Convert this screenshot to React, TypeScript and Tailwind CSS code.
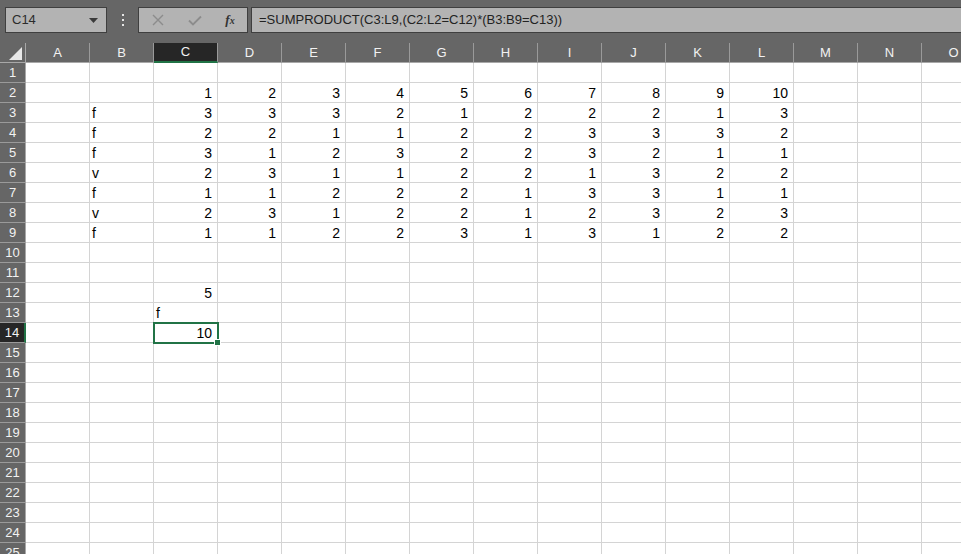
import React from "react";

const COLS = ["A", "B", "C", "D", "E", "F", "G", "H", "I", "J", "K", "L", "M", "N", "O"];
const ROW_COUNT = 25;

// table data: row number -> column letter -> value
const data: Record<number, Record<string, string | number>> = {
  2: { C: 1, D: 2, E: 3, F: 4, G: 5, H: 6, I: 7, J: 8, K: 9, L: 10 },
  12: { C: 5 },
  13: { C: "f" },
  14: { C: 10 },
};

const body: [string, number[]][] = [
  ["f", [3, 3, 3, 2, 1, 2, 2, 2, 1, 3]],
  ["f", [2, 2, 1, 1, 2, 2, 3, 3, 3, 2]],
  ["f", [3, 1, 2, 3, 2, 2, 3, 2, 1, 1]],
  ["v", [2, 3, 1, 1, 2, 2, 1, 3, 2, 2]],
  ["f", [1, 1, 2, 2, 2, 1, 3, 3, 1, 1]],
  ["v", [2, 3, 1, 2, 2, 1, 2, 3, 2, 3]],
  ["f", [1, 1, 2, 2, 3, 1, 3, 1, 2, 2]],
];
body.forEach(([label, nums], i) => {
  const row: Record<string, string | number> = { B: label };
  nums.forEach((n, j) => (row[COLS[j + 2]] = n));
  data[i + 3] = row;
});

const font = { fontFamily: '"Liberation Sans", Arial, sans-serif' };

function TopBar() {
  return (
    <div className="flex h-[43px] items-start bg-[#666666] pt-[7px]">
      {/* name box */}
      <div className="ml-[5px] flex h-[26px] w-[102px] items-center justify-between border border-[#3f3f3f] bg-[#b3b3b3] pl-[6px] pr-[8px]">
        <span className="text-[13px] text-[#2b2b2b]">C14</span>
        <svg width="9" height="5" viewBox="0 0 9 5">
          <path d="M0 0h9L4.5 5z" fill="#3a3a3a" />
        </svg>
      </div>
      {/* dots */}
      <div className="flex h-[26px] w-[31px] flex-col items-center justify-center gap-[3px]">
        <span className="h-[2px] w-[2px] bg-[#e6e6e6]" />
        <span className="h-[2px] w-[2px] bg-[#e6e6e6]" />
        <span className="h-[2px] w-[2px] bg-[#e6e6e6]" />
      </div>
      {/* cancel / enter / fx */}
      <div className="flex h-[26px] w-[110px] items-center border border-[#3f3f3f] bg-[#b3b3b3]">
        <div className="flex w-[38px] justify-center">
          <svg width="12" height="12" viewBox="0 0 12 12">
            <path d="M1 1l10 10M11 1L1 11" stroke="#8c8c8c" strokeWidth="1.4" />
          </svg>
        </div>
        <div className="flex w-[36px] justify-center">
          <svg width="14" height="11" viewBox="0 0 14 11">
            <path d="M1 5.5l4 4L13 1.5" stroke="#8c8c8c" strokeWidth="1.8" fill="none" />
          </svg>
        </div>
        <div className="flex w-[34px] justify-center">
          <span
            className="text-[13px] font-bold italic text-[#333333]"
            style={{ fontFamily: '"Liberation Serif", serif' }}
          >
            f<span className="text-[10px]">x</span>
          </span>
        </div>
      </div>
      {/* formula input */}
      <div className="ml-[3px] flex h-[26px] flex-1 items-center border border-r-0 border-[#3f3f3f] bg-[#b3b3b3] pl-[7px]">
        <span className="text-[13px] text-[#222222]">=SUMPRODUCT(C3:L9,(C2:L2=C12)*(B3:B9=C13))</span>
      </div>
    </div>
  );
}

function Grid() {
  return (
    <div className="grid grid-cols-[26px_repeat(15,64px)] grid-rows-[20px] auto-rows-[20px]">
      {/* corner */}
      <div className="relative border-b border-r border-[#a8a8a8] bg-[#666666]">
        <svg className="absolute bottom-[2px] right-[3px]" width="13" height="13" viewBox="0 0 13 13">
          <path d="M13 0V13H0z" fill="#e8e8e8" />
        </svg>
      </div>
      {COLS.map((c) => (
        <div
          key={c}
          className={
            c === "C"
              ? "flex items-center justify-center border-b-2 border-r border-b-[#217346] border-r-[#9a9a9a] bg-[#262626] text-[13px] text-[#f2f2f2]"
              : "flex items-center justify-center border-b border-r border-b-[#a8a8a8] border-r-[#9a9a9a] bg-[#666666] text-[13px] text-[#f2f2f2]"
          }
        >
          {c}
        </div>
      ))}
      {Array.from({ length: ROW_COUNT }, (_, i) => i + 1).map((r) => (
        <React.Fragment key={r}>
          <div
            className={
              r === 14
                ? "flex items-end justify-center border-b border-r-2 border-b-[#9a9a9a] border-r-[#217346] bg-[#262626] text-[13px] leading-[18px] text-[#f2f2f2]"
                : "flex items-end justify-center border-b border-r border-b-[#9a9a9a] border-r-[#a8a8a8] bg-[#666666] text-[13px] leading-[18px] text-[#f2f2f2]"
            }
          >
            {r}
          </div>
          {COLS.map((c) => {
            const v = data[r]?.[c];
            const isNum = typeof v === "number";
            const selected = r === 14 && c === "C";
            return (
              <div
                key={c}
                className={
                  (selected ? "z-10 " : "") +
                  (isNum
                    ? "relative flex items-end justify-end border-b border-r border-[#d4d4d4] bg-white pr-[5px] text-[14px] leading-[18px] text-black"
                    : "relative flex items-end justify-start border-b border-r border-[#d4d4d4] bg-white pl-[2px] text-[14px] leading-[18px] text-black")
                }
              >
                {v}
                {selected && (
                  <>
                    <div className="pointer-events-none absolute -left-[1px] -top-[1px] h-[22px] w-[66px] border-2 border-[#217346]" />
                    <div className="absolute -bottom-[4px] -right-[4px] h-[7px] w-[7px] border border-white bg-[#217346]" />
                  </>
                )}
              </div>
            );
          })}
        </React.Fragment>
      ))}
    </div>
  );
}

export default function App() {
  return (
    <div className="h-[554px] w-[961px] overflow-hidden bg-white" style={font}>
      <TopBar />
      <Grid />
    </div>
  );
}
